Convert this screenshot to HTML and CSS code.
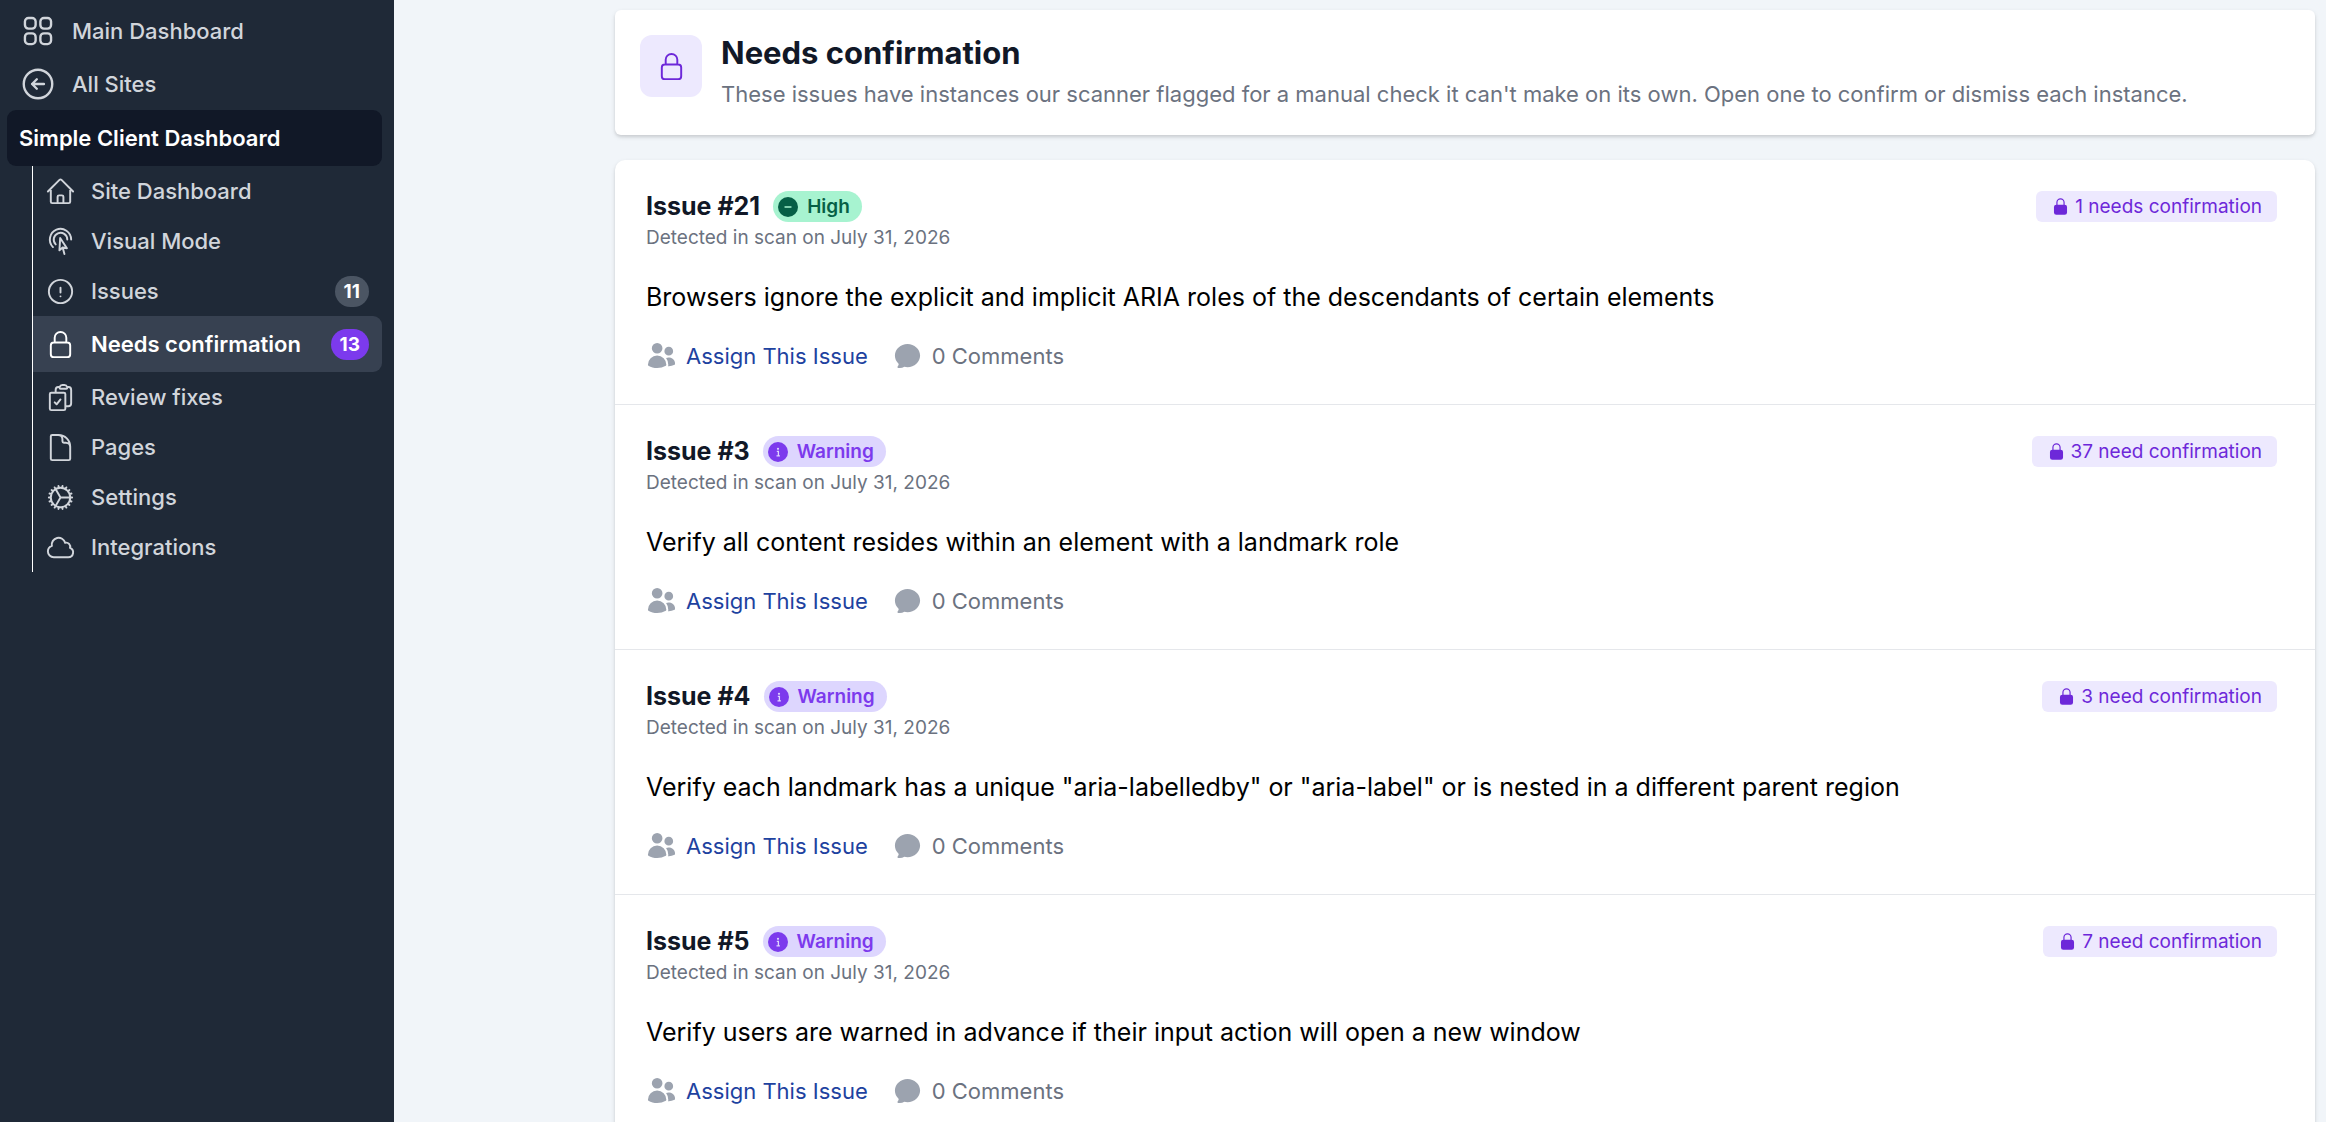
FILE: index.html
```
<!DOCTYPE html>
<html lang="en">
  <head>
    <meta charset="UTF-8" />
    <title>Needs confirmation</title>
    <link rel="stylesheet" href="styles.css">
  </head>
  <body>
    <!-- Shared icons -->
    <svg class="sprite" aria-hidden="true">
      <symbol id="icon-lock" viewBox="0 0 24 24">
        <path d="M16.5 10.5V6.75a4.5 4.5 0 1 0-9 0v3.75m-.75 11.25h10.5a2.25 2.25 0 0 0 2.25-2.25v-6.75a2.25 2.25 0 0 0-2.25-2.25H6.75a2.25 2.25 0 0 0-2.25 2.25v6.75a2.25 2.25 0 0 0 2.25 2.25Z" />
      </symbol>
      <symbol id="icon-lock-solid" viewBox="0 0 24 24">
        <path fill-rule="evenodd" d="M12 1.5a5.25 5.25 0 0 0-5.25 5.25v3a3 3 0 0 0-3 3v6.75a3 3 0 0 0 3 3h10.5a3 3 0 0 0 3-3v-6.75a3 3 0 0 0-3-3v-3c0-2.9-2.35-5.25-5.25-5.25Zm3.75 8.25v-3a3.75 3.75 0 1 0-7.5 0v3h7.5Z" />
      </symbol>
      <symbol id="icon-users" viewBox="0 0 24 24">
        <path d="M4.5 6.375a4.125 4.125 0 1 1 8.25 0 4.125 4.125 0 0 1-8.25 0ZM14.25 8.625a3.375 3.375 0 1 1 6.75 0 3.375 3.375 0 0 1-6.75 0ZM1.5 19.125a7.125 7.125 0 0 1 14.25 0v.003l-.001.119a.75.75 0 0 1-.363.63 13.067 13.067 0 0 1-6.761 1.873c-2.472 0-4.786-.684-6.76-1.873a.75.75 0 0 1-.364-.63l-.001-.122ZM17.25 19.128l-.001.144a2.25 2.25 0 0 1-.233.96 10.088 10.088 0 0 0 5.06-1.01.75.75 0 0 0 .42-.643 4.875 4.875 0 0 0-6.957-4.611 8.586 8.586 0 0 1 1.71 5.157v.003Z" />
      </symbol>
      <symbol id="icon-comment" viewBox="0 0 24 24">
        <path d="M5.337 21.718a6.707 6.707 0 0 1-.533-.074.75.75 0 0 1-.44-1.223 3.73 3.73 0 0 0 .814-1.686c.023-.115-.022-.317-.254-.543C3.274 16.587 2.25 14.41 2.25 12c0-5.03 4.428-9 9.75-9s9.75 3.97 9.75 9c0 5.03-4.428 9-9.75 9-.833 0-1.643-.097-2.417-.279a6.721 6.721 0 0 1-4.246.997Z" />
      </symbol>
      <symbol id="icon-minus" viewBox="0 0 20 20">
        <circle cx="10" cy="10" r="10" />
        <path d="M7 10h6" fill="none" stroke="#a7f3d0" stroke-width="1.3" stroke-linecap="round" />
      </symbol>
      <symbol id="icon-info" viewBox="0 0 20 20">
        <circle cx="10" cy="10" r="10" />
        <circle cx="10" cy="6.8" r="1.1" fill="#ddd6fe" />
        <path d="M8.8 9.3h1.6v4.4M8.5 13.8h3.4" fill="none" stroke="#ddd6fe" stroke-width="1.3" />
      </symbol>
    </svg>

    <div class="layout">
      <nav class="sidebar" aria-label="Main">
        <a href="#" class="top-link">
          <svg class="icon-lg outline" viewBox="0 0 24 24">
            <rect x="3.75" y="3.75" width="6.75" height="6.75" rx="2.25" />
            <rect x="13.5" y="3.75" width="6.75" height="6.75" rx="2.25" />
            <rect x="3.75" y="13.5" width="6.75" height="6.75" rx="2.25" />
            <rect x="13.5" y="13.5" width="6.75" height="6.75" rx="2.25" />
          </svg>
          Main Dashboard
        </a>
        <a href="#" class="top-link">
          <svg class="icon-lg outline" viewBox="0 0 24 24">
            <path d="m11.25 9-3 3m0 0 3 3m-3-3h7.5M21 12a9 9 0 1 1-18 0 9 9 0 0 1 18 0Z" />
          </svg>
          All Sites
        </a>
        <a href="#" class="site-name">Simple Client Dashboard</a>

        <ul class="site-menu">
          <li>
            <a href="#">
              <svg class="icon outline" viewBox="0 0 24 24">
                <path d="m2.25 12 8.954-8.955c.44-.439 1.152-.439 1.591 0L21.75 12M4.5 9.75v10.125c0 .621.504 1.125 1.125 1.125H9.75v-4.875c0-.621.504-1.125 1.125-1.125h2.25c.621 0 1.125.504 1.125 1.125V21h4.125c.621 0 1.125-.504 1.125-1.125V9.75M8.25 21h8.25" />
              </svg>
              Site Dashboard
            </a>
          </li>
          <li>
            <a href="#">
              <svg class="icon outline" viewBox="0 0 24 24">
                <path d="M15.042 21.672 13.684 16.6m0 0-2.51 2.225.569-9.47 5.227 7.917-3.286-.672Zm-7.518-.267A8.25 8.25 0 1 1 20.25 10.5M8.288 14.212A5.25 5.25 0 1 1 17.25 10.5" />
              </svg>
              Visual Mode
            </a>
          </li>
          <li>
            <a href="#">
              <svg class="icon outline" viewBox="0 0 24 24">
                <path d="M12 9v3.75m9-.75a9 9 0 1 1-18 0 9 9 0 0 1 18 0Zm-9 3.75h.008v.008H12v-.008Z" />
              </svg>
              Issues
              <span class="count">11</span>
            </a>
          </li>
          <li>
            <a href="#" class="active" aria-current="page">
              <svg class="icon outline"><use href="#icon-lock" /></svg>
              Needs confirmation
              <span class="count">13</span>
            </a>
          </li>
          <li>
            <a href="#">
              <svg class="icon outline" viewBox="0 0 24 24">
                <path d="M11.35 3.836c-.065.21-.1.433-.1.664 0 .414.336.75.75.75h4.5a.75.75 0 0 0 .75-.75 2.25 2.25 0 0 0-.1-.664m-5.8 0A2.251 2.251 0 0 1 13.5 2.25H15c1.012 0 1.867.668 2.15 1.586m-5.8 0c-.376.023-.75.05-1.124.08C9.095 4.01 8.25 4.973 8.25 6.108V8.25m8.9-4.414c.376.023.75.05 1.124.08 1.131.094 1.976 1.057 1.976 2.192V16.5A2.25 2.25 0 0 1 18 18.75h-2.25m-7.5-10.5H4.875c-.621 0-1.125.504-1.125 1.125v11.25c0 .621.504 1.125 1.125 1.125h9.75c.621 0 1.125-.504 1.125-1.125V18.75m-7.5-10.5h6.375c.621 0 1.125.504 1.125 1.125v9.375m-8.25-3 1.5 1.5 3-3.75" />
              </svg>
              Review fixes
            </a>
          </li>
          <li>
            <a href="#">
              <svg class="icon outline" viewBox="0 0 24 24">
                <path d="M19.5 14.25v-2.625a3.375 3.375 0 0 0-3.375-3.375h-1.5A1.125 1.125 0 0 1 13.5 7.125v-1.5a3.375 3.375 0 0 0-3.375-3.375H8.25m2.25 0H5.625c-.621 0-1.125.504-1.125 1.125v17.25c0 .621.504 1.125 1.125 1.125h12.75c.621 0 1.125-.504 1.125-1.125V11.25a9 9 0 0 0-9-9Z" />
              </svg>
              Pages
            </a>
          </li>
          <li>
            <a href="#">
              <svg class="icon outline" viewBox="0 0 24 24">
                <path d="M4.5 12a7.5 7.5 0 0 0 15 0m-15 0a7.5 7.5 0 1 1 15 0m-15 0H3m16.5 0H21m-1.5 0H12m-8.457 3.077 1.41-.513m14.095-5.13 1.41-.513M5.106 17.785l1.15-.964m11.49-9.642 1.149-.964M7.501 19.795l.75-1.3m7.5-12.99.75-1.3m-6.063 16.658.26-1.477m2.605-14.772.26-1.477m0 17.726-.26-1.477M10.698 4.614l-.26-1.477M16.5 19.794l-.75-1.299M7.5 4.205 12 12m6.894 5.785-1.149-.964M6.256 7.178l-1.15-.964m15.352 8.864-1.41-.513M4.954 9.435l-1.41-.514M12.002 12l-3.75 6.495" />
              </svg>
              Settings
            </a>
          </li>
          <li>
            <a href="#">
              <svg class="icon outline" viewBox="0 0 24 24">
                <path d="M2.25 15a4.5 4.5 0 0 0 4.5 4.5H18a3.75 3.75 0 0 0 1.332-7.257 3 3 0 0 0-3.758-3.848 5.25 5.25 0 0 0-10.233 2.33A4.502 4.502 0 0 0 2.25 15Z" />
              </svg>
              Integrations
            </a>
          </li>
        </ul>
      </nav>

      <main class="content">
        <header class="page-header">
          <div class="header-icon">
            <svg class="icon outline"><use href="#icon-lock" /></svg>
          </div>
          <div>
            <h1>Needs confirmation</h1>
            <p>These issues have instances our scanner flagged for a manual check it can't make on its own. Open one to confirm or dismiss each instance.</p>
          </div>
        </header>

        <section class="issue-list">
          <article class="issue">
            <div class="issue-top">
              <h2>Issue #21</h2>
              <span class="severity high"><svg><use href="#icon-minus" /></svg>High</span>
              <span class="confirm-tag"><svg><use href="#icon-lock-solid" /></svg>1 needs confirmation</span>
            </div>
            <p class="detected">Detected in scan on July 31, 2026</p>
            <p class="description">Browsers ignore the explicit and implicit ARIA roles of the descendants of certain elements</p>
            <div class="issue-actions">
              <button type="button" class="assign"><svg class="icon"><use href="#icon-users" /></svg>Assign This Issue</button>
              <span class="comments"><svg class="icon"><use href="#icon-comment" /></svg>0 Comments</span>
            </div>
          </article>

          <article class="issue">
            <div class="issue-top">
              <h2>Issue #3</h2>
              <span class="severity warning"><svg><use href="#icon-info" /></svg>Warning</span>
              <span class="confirm-tag"><svg><use href="#icon-lock-solid" /></svg>37 need confirmation</span>
            </div>
            <p class="detected">Detected in scan on July 31, 2026</p>
            <p class="description">Verify all content resides within an element with a landmark role</p>
            <div class="issue-actions">
              <button type="button" class="assign"><svg class="icon"><use href="#icon-users" /></svg>Assign This Issue</button>
              <span class="comments"><svg class="icon"><use href="#icon-comment" /></svg>0 Comments</span>
            </div>
          </article>

          <article class="issue">
            <div class="issue-top">
              <h2>Issue #4</h2>
              <span class="severity warning"><svg><use href="#icon-info" /></svg>Warning</span>
              <span class="confirm-tag"><svg><use href="#icon-lock-solid" /></svg>3 need confirmation</span>
            </div>
            <p class="detected">Detected in scan on July 31, 2026</p>
            <p class="description">Verify each landmark has a unique "aria-labelledby" or "aria-label" or is nested in a different parent region</p>
            <div class="issue-actions">
              <button type="button" class="assign"><svg class="icon"><use href="#icon-users" /></svg>Assign This Issue</button>
              <span class="comments"><svg class="icon"><use href="#icon-comment" /></svg>0 Comments</span>
            </div>
          </article>

          <article class="issue">
            <div class="issue-top">
              <h2>Issue #5</h2>
              <span class="severity warning"><svg><use href="#icon-info" /></svg>Warning</span>
              <span class="confirm-tag"><svg><use href="#icon-lock-solid" /></svg>7 need confirmation</span>
            </div>
            <p class="detected">Detected in scan on July 31, 2026</p>
            <p class="description">Verify users are warned in advance if their input action will open a new window</p>
            <div class="issue-actions">
              <button type="button" class="assign"><svg class="icon"><use href="#icon-users" /></svg>Assign This Issue</button>
              <span class="comments"><svg class="icon"><use href="#icon-comment" /></svg>0 Comments</span>
            </div>
          </article>
        </section>
      </main>
    </div>
  </body>
</html>
```

FILE: styles.css
```
* {
  box-sizing: border-box;
}

body {
  margin: 0;
  font-family: Inter, "Liberation Sans", sans-serif;
  font-size: 22px;
  color: #111827;
  background-color: #f1f5f9;
}

h1,
h2,
p,
ul {
  margin: 0;
  padding: 0;
}

a {
  color: inherit;
  text-decoration: none;
}

svg {
  flex-shrink: 0;
  fill: currentColor;
}

.sprite {
  display: none;
}

.icon {
  width: 31px;
  height: 31px;
}

.icon-lg {
  width: 38px;
  height: 38px;
}

.outline {
  fill: none;
  stroke: currentColor;
  stroke-width: 1.5;
  stroke-linecap: round;
  stroke-linejoin: round;
}

.layout {
  display: flex;
  height: 100vh;
  overflow: hidden;
}

/* Sidebar */
.sidebar {
  flex: 0 0 394px;
  padding: 4px 12px 0 7px;
  background-color: #1f2937;
  color: #d1d5db;
  font-weight: 500;
}

.top-link {
  display: flex;
  align-items: center;
  gap: 15px;
  height: 53px;
  padding-left: 12px;
}

.site-name {
  display: flex;
  align-items: center;
  height: 56px;
  padding: 0 12px;
  border-radius: 9px;
  background-color: #111827;
  color: #fff;
  font-weight: 600;
}

.site-menu {
  margin-left: 25px;
  border-left: 1px solid #fff;
  list-style: none;
}

.site-menu a {
  display: flex;
  align-items: center;
  gap: 15px;
  height: 50px;
  padding: 0 13px 0 12px;
}

.site-menu a.active {
  height: 56px;
  border-radius: 0 9px 9px 0;
  background-color: #374151;
  color: #fff;
  font-weight: 600;
}

.count {
  margin-left: auto;
  padding: 0 9px;
  border-radius: 16px;
  background-color: #4b5563;
  color: #fff;
  font-size: 19px;
  font-weight: 700;
  line-height: 31px;
}

.active .count {
  background-color: #7c3aed;
}

/* Content */
.content {
  flex: 1;
  min-width: 0;
  padding: 10px 11px 0 221px;
}

.page-header {
  display: flex;
  gap: 19px;
  padding: 25px;
  border-radius: 6px;
  background-color: #fff;
  box-shadow: 0 2px 5px rgba(0, 0, 0, 0.1), 0 2px 3px rgba(0, 0, 0, 0.08);
}

.header-icon {
  display: flex;
  align-items: center;
  justify-content: center;
  width: 62px;
  height: 62px;
  border-radius: 12px;
  background-color: #ede9fe;
  color: #6d28d9;
}

.page-header h1 {
  font-size: 31px;
  font-weight: 700;
  line-height: 36px;
}

.page-header p {
  margin-top: 8px;
  color: #6b7280;
  line-height: 31px;
}

.issue-list {
  margin-top: 25px;
  border-radius: 10px;
  background-color: #fff;
  box-shadow: 0 2px 5px rgba(0, 0, 0, 0.1), 0 2px 3px rgba(0, 0, 0, 0.08);
}

.issue {
  padding: 31px 38px 33px 31px;
  border-bottom: 1px solid #e5e7eb;
}

.issue-top {
  display: flex;
  align-items: center;
  height: 31px;
}

.issue-top h2 {
  margin-right: 13px;
  font-size: 25px;
  font-weight: 700;
  line-height: 31px;
}

.severity {
  display: flex;
  align-items: center;
  gap: 9px;
  padding: 0 12px 0 5px;
  border-radius: 16px;
  font-size: 19px;
  font-weight: 600;
  line-height: 31px;
}

.severity svg {
  width: 20px;
  height: 20px;
}

.high {
  background-color: #a7f3d0;
  color: #065f46;
}

.warning {
  background-color: #ddd6fe;
  color: #7c3aed;
}

.confirm-tag {
  display: flex;
  align-items: center;
  gap: 5px;
  margin-left: auto;
  padding: 0 15px;
  border-radius: 6px;
  background-color: #ede9fe;
  color: #6d28d9;
  font-size: 19px;
  line-height: 31px;
}

.confirm-tag svg {
  width: 19px;
  height: 19px;
}

.detected {
  color: #6b7280;
  font-size: 19px;
  line-height: 31px;
}

.description {
  margin-top: 25px;
  color: #000;
  font-size: 25px;
  line-height: 38px;
}

.issue-actions {
  display: flex;
  gap: 24px;
  margin-top: 24px;
  color: #6b7280;
}

.assign,
.comments {
  display: flex;
  align-items: center;
  gap: 9px;
}

.assign {
  padding: 0;
  border: none;
  background: none;
  color: #1e429f;
  font: inherit;
  cursor: pointer;
}

.issue-actions .icon {
  color: #9ca3af;
}
```
